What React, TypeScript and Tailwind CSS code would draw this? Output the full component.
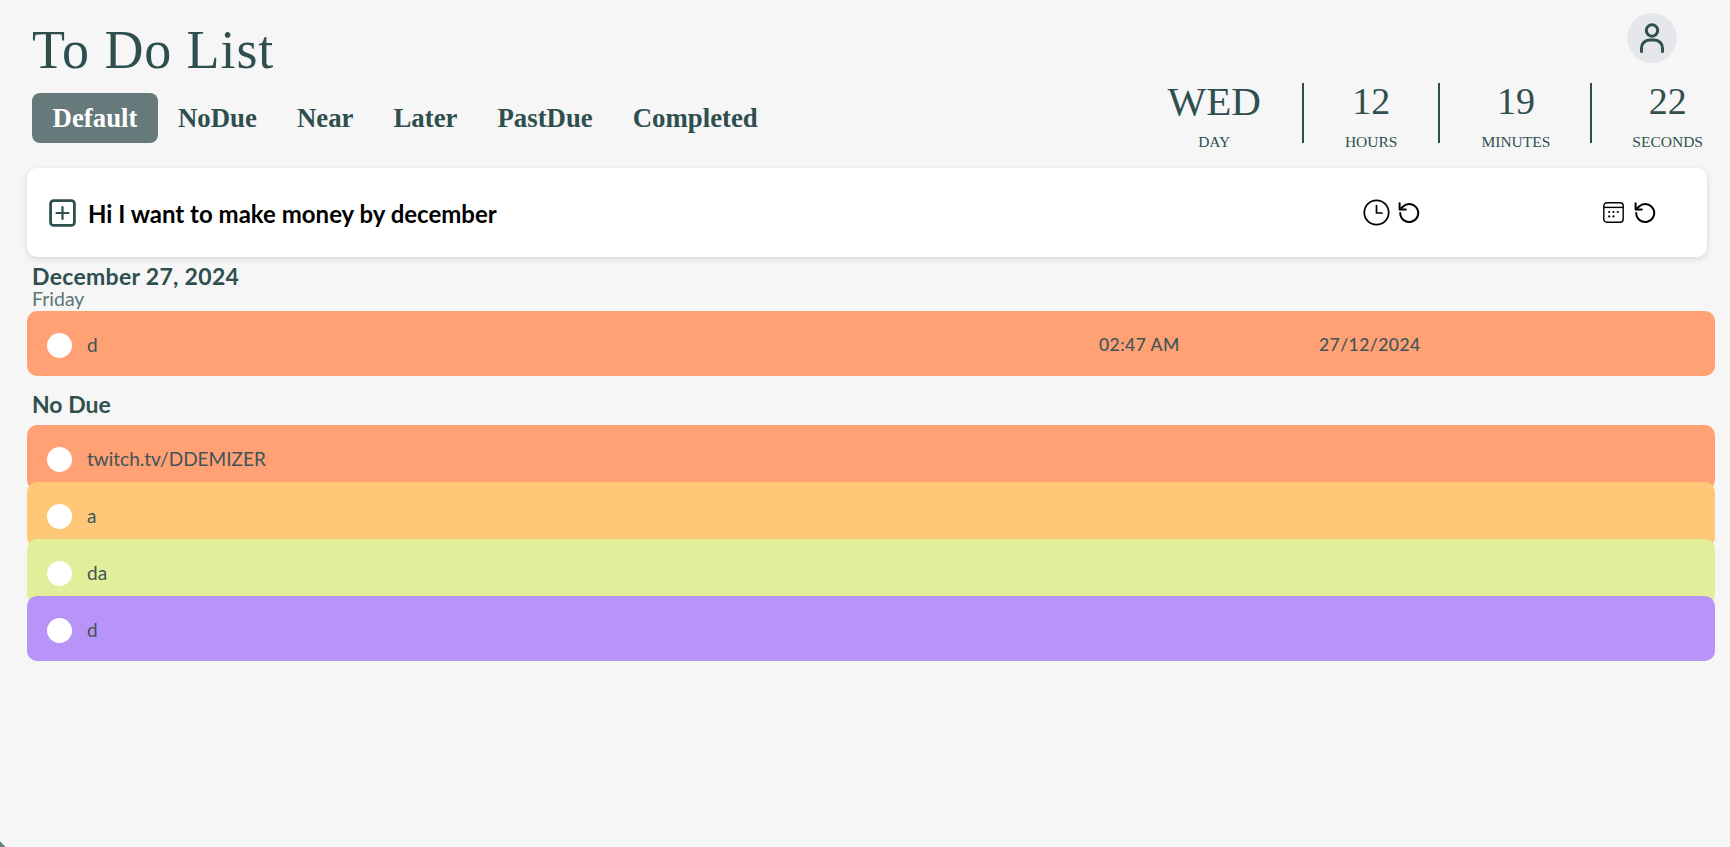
const ink = "text-[#2f4f4f]";

function UserIcon() {
  return (
    <svg width="24" height="30" viewBox="0 0 24 30" fill="none" stroke="#2f4f4f" strokeWidth="3" strokeLinecap="round">
      <circle cx="12" cy="7.5" r="5.7" />
      <path d="M1.5 28.5v-3.5a8 8 0 0 1 8-8h5a8 8 0 0 1 8 8v3.5" />
    </svg>
  );
}

function PlusBox() {
  return (
    <svg width="27" height="28" viewBox="0 0 27 28" fill="none" stroke="#2f4f4f" strokeWidth="2.8" strokeLinecap="round">
      <rect x="1.6" y="1.6" width="23.8" height="24.8" rx="3" />
      <path d="M13.5 8v12M7.5 14h12" strokeWidth="2.2" />
    </svg>
  );
}

function ClockIcon() {
  return (
    <svg width="27" height="27" viewBox="0 0 27 27" fill="none" stroke="#000" strokeWidth="1.7" strokeLinecap="round">
      <circle cx="13.5" cy="13.5" r="12.2" />
      <path d="M13.5 6.5v7.5h5.5" />
    </svg>
  );
}

function UndoIcon() {
  return (
    <svg width="22" height="22" viewBox="0 0 22 22" fill="none" stroke="#000" strokeWidth="2" strokeLinecap="round" strokeLinejoin="round">
      <path d="M2.2 11a9 9 0 1 0 2.9-6.6L2 7.2" />
      <path d="M1.6 1.2v6.2h6.2" />
    </svg>
  );
}

function CalendarIcon() {
  return (
    <svg width="21" height="21" viewBox="0 0 21 21" fill="none" stroke="#000" strokeWidth="1.4">
      <rect x="0.8" y="0.8" width="19.4" height="19.4" rx="3" />
      <path d="M1 5.4h19" />
      <g fill="#000" stroke="none">
        <circle cx="6.2" cy="10" r="1.1" />
        <circle cx="10.5" cy="10" r="1.1" />
        <circle cx="14.8" cy="10" r="1.1" />
        <circle cx="6.2" cy="14.4" r="1.1" />
        <circle cx="10.5" cy="14.4" r="1.1" />
      </g>
    </svg>
  );
}

function TimeCol({ value, label, big, spacing }: { value: string; label: string; big?: boolean; spacing: string }) {
  return (
    <div className={`flex h-[60px] flex-col items-center ${spacing}`}>
      <div className={`${big ? "text-[41px]" : "text-[38px]"} h-[36px] leading-[36px] ${ink}`}>{value}</div>
      <div className={`mt-[14px] text-[15.5px] leading-[18px] ${ink}`}>{label}</div>
    </div>
  );
}

function Row({ color, text, time, date, overlap }: { color: string; text: string; time?: string; date?: string; overlap?: boolean }) {
  return (
    <div className={`${color} ${overlap ? "-mt-2" : ""} relative flex h-[65px] w-[1688px] items-center rounded-[10px] pl-5`}>
      <div className="mt-[3px] h-[25px] w-[25px] rounded-full bg-white" />
      <div className="ml-[15px] w-[1012px] pt-[3px] text-[19px] text-[#3e5558]">{text}</div>
      {time && <div className="w-[220px] pt-[3px] text-[17.5px] font-medium tracking-[0.45px] text-[#3e5558]">{time}</div>}
      {date && <div className="pt-[3px] text-[17.5px] font-medium tracking-[0.45px] text-[#3e5558]">{date}</div>}
    </div>
  );
}

const tabs = ["NoDue", "Near", "Later", "PastDue", "Completed"];

export default function App() {
  return (
    <div className="relative h-[847px] w-full overflow-hidden bg-[#f6f6f6] font-['Lato',sans-serif]">
      <header className="flex justify-between">
        <div className="pl-8 font-['Liberation_Serif',serif]">
          <h1 className={`mt-[21px] h-[59px] text-[54px] leading-[59px] tracking-[0.9px] ${ink}`}>To Do List</h1>
          <nav className="mt-[13px] flex">
            <button className="h-[50px] w-[126px] rounded-[8px] bg-[#667a7c] text-center text-[26.8px] font-bold text-white">Default</button>
            {tabs.map((t) => (
              <button key={t} className={`h-[50px] px-5 text-[26.8px] font-bold ${ink}`}>{t}</button>
            ))}
          </nav>
        </div>
        <div className="flex flex-col items-end pr-[27px] font-['Liberation_Serif',serif]">
          <div className="mt-[13px] mr-[26px] flex h-[50px] w-[50px] items-center justify-center rounded-full bg-[#e5e7eb]">
            <UserIcon />
          </div>
          <div className="mt-[20px] flex">
            <TimeCol value="WED" label="DAY" big spacing="border-r-2 border-[#2f4f4f] pl-[41px] pr-[41px]" />
            <TimeCol value="12" label="HOURS" spacing="border-r-2 border-[#2f4f4f] pl-[41px] pr-[41px]" />
            <TimeCol value="19" label="MINUTES" spacing="border-r-2 border-[#2f4f4f] pl-[41px] pr-[40px]" />
            <TimeCol value="22" label="SECONDS" spacing="pl-[40px]" />
          </div>
        </div>
      </header>

      <main className="pl-[27px]">
        <section className="mt-[25px] flex h-[89px] w-[1680px] items-center rounded-[10px] bg-white pl-[22px] shadow-[0_2px_6px_rgba(0,0,0,0.13)]">
          <PlusBox />
          <div className="ml-[12px] w-[1275px] pt-[3px] text-[24px] font-bold text-black">Hi I want to make money by december</div>
          <div className="flex w-[240px] items-center gap-[8px]">
            <ClockIcon />
            <UndoIcon />
          </div>
          <div className="flex items-center gap-[10px]">
            <CalendarIcon />
            <UndoIcon />
          </div>
        </section>

        <div className="pl-[5px] pt-[5px]">
          <div className={`text-[23px] font-bold leading-[28px] tracking-[0.3px] ${ink}`}>December 27, 2024</div>
          <div className="text-[19.5px] leading-[17px] text-[#5d7577]">Friday</div>
        </div>
        <div className="mt-[4px]">
          <Row color="bg-[#ffa075]" text="d" time="02:47 AM" date="27/12/2024" />
        </div>

        <div className={`pl-[5px] pt-[13px] text-[23px] font-bold leading-[30px] ${ink}`}>No Due</div>
        <div className="mt-[6px]">
          <Row color="bg-[#ffa075]" text="twitch.tv/DDEMIZER" />
          <Row color="bg-[#ffc878]" text="a" overlap />
          <Row color="bg-[#e2ee99]" text="da" overlap />
          <Row color="bg-[#b994f8]" text="d" overlap />
        </div>
      </main>

      <div className="absolute -bottom-[4px] -left-[4px] h-[8px] w-[8px] rotate-45 bg-[#5f8586]" />
    </div>
  );
}
